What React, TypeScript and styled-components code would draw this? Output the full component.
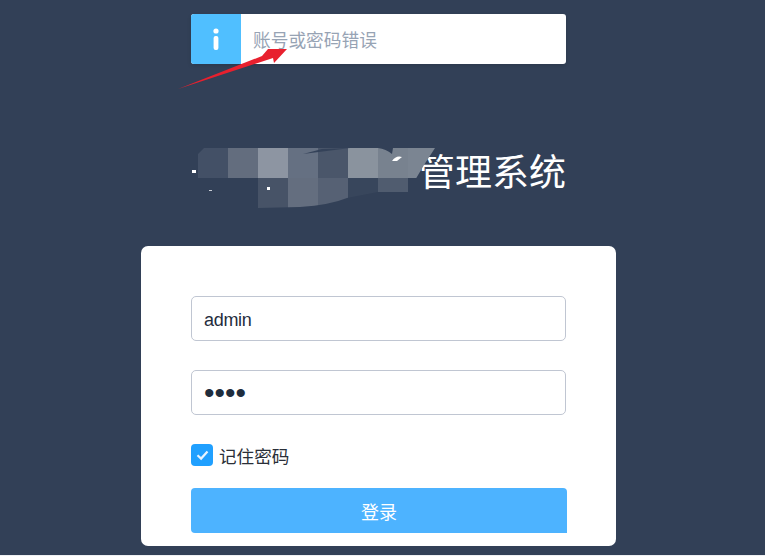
import React from "react"
import styled, { createGlobalStyle } from "styled-components"

const FONT = `"Noto Sans CJK SC", "Noto Sans", sans-serif`

const GlobalStyle = createGlobalStyle`
  html, body {
    margin: 0;
    padding: 0;
    background: #eef0f3;
    overflow: hidden;
  }
  * {
    box-sizing: border-box;
  }
`

const Page = styled.div`
  width: 765px;
  height: 555px;
  background: #324057;
  display: flex;
  flex-direction: column;
  align-items: center;
  padding: 14px 8px 0 0;
  font-family: ${FONT};
  overflow: hidden;
`

const Column = styled.div`
  width: 375px;
  position: relative;
`

const Alert = styled.div`
  display: flex;
  width: 375px;
  height: 50px;
  background: #fff;
  border-radius: 3px;
  overflow: hidden;
  box-shadow: 0 2px 4px rgba(0, 0, 0, 0.12);
`

const AlertIcon = styled.div`
  width: 50px;
  background: #50bfff;
  display: flex;
  align-items: center;
  justify-content: center;
`

const AlertText = styled.div`
  flex: 1;
  padding-left: 12px;
  display: flex;
  align-items: center;
  font-size: 17.7px;
  color: #97a3b4;
`

const Arrow = styled.svg`
  position: absolute;
  left: -21px;
  top: 26px;
`

const Title = styled.h1`
  position: relative;
  width: 375px;
  height: 50px;
  margin: 81px 0 51px;
  font-size: 37px;
  font-weight: 400;
  line-height: 50px;
  text-align: right;
  color: #fff;
`

const Mosaic = styled.svg`
  position: absolute;
  left: -6px;
  top: -5px;
`

const Card = styled.form`
  width: 475px;
  height: 300px;
  flex-shrink: 0;
  padding: 50px;
  background: #fff;
  border-radius: 7px;
  display: flex;
  flex-direction: column;
`

const Field = styled.input<{ $dots?: boolean }>`
  display: block;
  flex-shrink: 0;
  width: 375px;
  height: 45px;
  margin-bottom: 29px;
  padding: ${({ $dots }) => ($dots ? "0 12px" : "3px 12px 0")};
  border: 1px solid #c0c6d2;
  border-radius: 5px;
  outline: none;
  background: #fff;
  font-family: "Liberation Sans", sans-serif;
  font-size: ${({ $dots }) => ($dots ? "30px" : "18px")};
  letter-spacing: ${({ $dots }) => ($dots ? "0" : "-0.3px")};
  color: #1f2d3d;
`

const Remember = styled.label`
  display: flex;
  align-items: center;
  gap: 6px;
  height: 22px;
  flex-shrink: 0;
  font-size: 17.6px;
  color: #2a2f38;
`

const CheckBox = styled.span`
  width: 22px;
  height: 22px;
  border-radius: 4px;
  background: #20a0ff;
  display: flex;
  align-items: center;
  justify-content: center;
`

const Submit = styled.button`
  width: 376px;
  height: 45px;
  flex-shrink: 0;
  margin-top: 22px;
  border: 0;
  border-radius: 4px 4px 0 4px;
  background: #4db3ff;
  font-family: ${FONT};
  font-size: 18px;
  color: #fff;
`

const cells: [number, number, number, number, string][] = [
  [198, 148, 30, 30, "#435066"],
  [228, 148, 30, 30, "#636d7e"],
  [258, 148, 30, 30, "#8d95a2"],
  [288, 148, 30, 30, "#657082"],
  [318, 148, 30, 30, "#4a566a"],
  [348, 148, 30, 30, "#8a939e"],
  [378, 148, 30, 30, "#78828f"],
  [408, 148, 30, 30, "#7b8592"],
  [258, 178, 30, 30, "#475367"],
  [288, 178, 30, 30, "#646e7f"],
  [318, 178, 30, 30, "#566174"],
  [348, 178, 30, 30, "#38465c"],
  [378, 178, 30, 30, "#505c6f"],
]

export default function App() {
  return (
    <>
      <GlobalStyle />
      <Page>
        <Column>
          <Alert>
            <AlertIcon>
              <svg width="8" height="22" viewBox="0 0 8 22">
                <circle cx="4" cy="3" r="2.6" fill="#fff" />
                <rect x="1.6" y="8" width="4.8" height="14" rx="2" fill="#fff" />
              </svg>
            </AlertIcon>
            <AlertText>账号或密码错误</AlertText>
          </Alert>
          <Arrow width="115" height="50" viewBox="170 40 115 50" style={{ overflow: "visible" }}>
            <polygon points="178,89 262,56 268,49 287,49 274,63 273,58" fill="#e8202e" />
          </Arrow>
        </Column>
        <Title>
          管理系统
          <Mosaic width="250" height="75" viewBox="185 140 250 75">
            <defs>
              <clipPath id="smear">
                <path d="M204 148 H378 Q386 149 392 154 L393 148 H435 L424 165 L408 192 H378 L347 198 Q330 205 300 207 L258 208 V180 H198 V154 Z" />
              </clipPath>
            </defs>
            <g clipPath="url(#smear)">
              {cells.map(([x, y, w, h, fill]) => (
                <rect key={`${x}-${y}`} x={x} y={y} width={w} height={h} fill={fill} />
              ))}
            </g>
            <polygon points="303,154 350,148 322,149" fill="#344259" />
            <rect x="192" y="170" width="4" height="3" fill="#fff" />
            <rect x="267" y="187" width="3" height="3" fill="#fff" />
            <rect x="209" y="190" width="3" height="1" fill="#c9ced6" />
            <path d="M392 161 Q396 155 402 157 L397 161 Z" fill="#fff" />
          </Mosaic>
        </Title>
        <Card onSubmit={(e) => e.preventDefault()}>
          <Field type="text" value="admin" readOnly />
          <Field $dots type="password" value="1234" readOnly />
          <Remember>
            <CheckBox>
              <svg width="15" height="12" viewBox="0 0 14 12">
                <path d="M2 6.2 L5.6 9.6 L12 2.6" fill="none" stroke="#e8f4ff" strokeWidth="2.2" />
              </svg>
            </CheckBox>
            记住密码
          </Remember>
          <Submit type="submit">登录</Submit>
        </Card>
      </Page>
    </>
  )
}
